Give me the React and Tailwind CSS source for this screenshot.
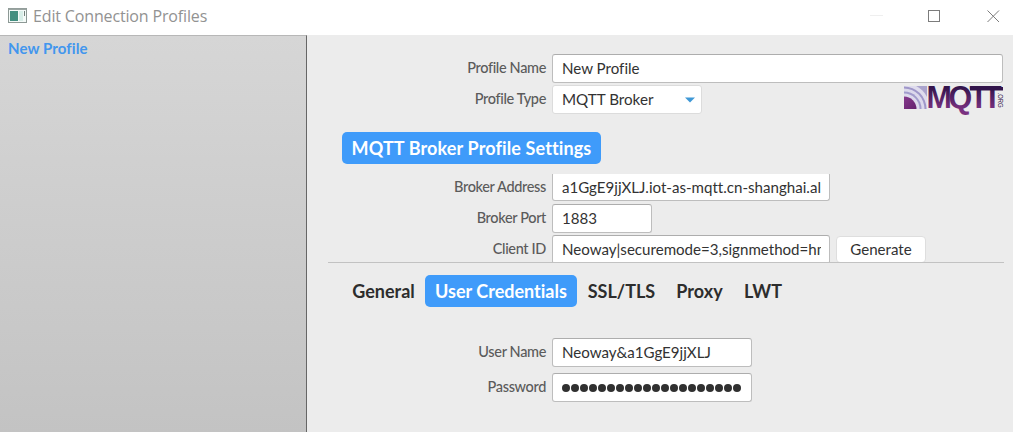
import { useState } from 'react';
import clsx from 'clsx';

const tabs = [
    { name: 'General', className: 'w-[83px]' },
    { name: 'User Credentials', className: 'w-[152px]' },
    { name: 'SSL/TLS', className: 'w-[89px]' },
    { name: 'Proxy', className: 'w-[67px]' },
    { name: 'LWT', className: 'w-[60px]' },
];

const MqttLogo = () => (
    <svg width="99" height="26" viewBox="0 0 99 26" className="overflow-visible">
        <defs>
            <linearGradient id="mqtt" gradientUnits="userSpaceOnUse" x1="0" y1="1" x2="0" y2="23">
                <stop offset="0" stopColor="#32144b" />
                <stop offset="1" stopColor="#793180" />
            </linearGradient>
            <linearGradient id="core" x1="0" y1="0" x2="1" y2="1">
                <stop offset="0" stopColor="#96469b" />
                <stop offset="1" stopColor="#55155f" />
            </linearGradient>
            <clipPath id="tile">
                <rect x="0" y="0" width="23" height="23" />
            </clipPath>
        </defs>
        <g clipPath="url(#tile)">
            <rect x="0" y="0" width="23" height="23" fill="#aaa3cd" />
            <circle cx="0" cy="23" r="26" fill="#dfdced" />
            <circle cx="0" cy="23" r="22.5" fill="#9f97c9" />
            <circle cx="0" cy="23" r="20.5" fill="#dcd9ec" />
            <circle cx="0" cy="23" r="17.5" fill="#a29ccc" />
            <circle cx="0" cy="23" r="15.5" fill="#dddaec" />
            <circle cx="0" cy="23" r="12.5" fill="url(#core)" />
        </g>
        <text x="22.5 44.5 65.5 79" y="22" fontFamily="Liberation Sans, sans-serif" fontWeight="700" fontSize="30.5" fill="url(#mqtt)">MQTT</text>
        <rect x="66" y="1" width="33" height="3.5" fill="#32144b" />
        <text transform="translate(93.5 6.5) rotate(90)" textLength="15" lengthAdjust="spacingAndGlyphs" fontFamily="Liberation Sans, sans-serif" fontSize="7" fill="#32144b">.ORG</text>
    </svg>
);

const Label = ({ children }) => (
    <label className="w-[219px] shrink-0 pr-[6px] text-right text-[14.5px] leading-[28px] font-medium tracking-[-0.35px] text-[#5b5b5b]">
        {children}
    </label>
);

const Field = ({ className, value, type = 'text' }) => (
    <input
        type={type}
        defaultValue={value}
        className={clsx(
            'h-[29px] rounded-[3px] border border-[#bdbdbd] border-t-[#adadad] bg-white pl-[9px] pr-[8px] text-[15.1px] text-[#323232] outline-none',
            className
        )}
    />
);

const App = () => {
    const [activeTab, setActiveTab] = useState('User Credentials');

    return (
        <div className="flex h-[432px] w-[1013px] flex-col overflow-hidden bg-[#ececec] font-['Lato',sans-serif] [font-variant-ligatures:none]">
            {/* Title bar */}
            <header className="flex h-[35px] shrink-0 items-center bg-white pl-[8px] pr-[13px]">
                <svg width="19" height="15" viewBox="0 0 19 15" className="mt-[-4px]">
                    <rect x="0.5" y="0.5" width="18" height="14" fill="#f4faf8" stroke="#8d9995" />
                    <rect x="0.5" y="0.5" width="18" height="1.5" fill="#9aa4a1" />
                    <rect x="2" y="3" width="8" height="10" fill="#438f80" />
                    <rect x="11" y="3" width="4" height="10" fill="#d8eee8" />
                    <path d="M16.5 3v5" stroke="#71817c" />
                </svg>
                <h1 className="ml-[6px] mt-[-3px] font-['Open_Sans',sans-serif] text-[16px] tracking-[-0.15px] text-[#929292]">Edit Connection Profiles</h1>
                <div className="ml-auto mt-[-3px] flex items-center">
                    <svg width="130" height="14" viewBox="0 0 130 14" fill="none">
                        <path d="M0 6.5h13" stroke="#efefef" />
                        <rect x="58.5" y="1.5" width="11" height="11" stroke="#7c7c7c" />
                        <path d="M117.5 1.5l11.5 11.5M129 1.5l-11.5 11.5" stroke="#7c7c7c" />
                    </svg>
                </div>
            </header>

            <div className="flex flex-1">
                {/* Profile list */}
                <aside className="w-[307px] shrink-0 border-t border-r border-t-[#b7b7b7] border-r-[#666] bg-linear-to-b from-[#d6d6d6] to-[#c3c3c3] pl-[8px] pt-px">
                    <span className="block text-[15px] leading-[22px] font-bold tracking-[0.1px] text-[#4296ee]">New Profile</span>
                </aside>

                <main className="w-[706px] pl-[26px] pt-[19px]">
                    <div className="flex">
                        <Label>Profile Name</Label>
                        <Field className="w-[451px] pb-[2px]" value="New Profile" />
                    </div>
                    <div className="mt-[2px] flex">
                        <Label>Profile Type</Label>
                        <button className="flex h-[29px] w-[150px] items-center justify-between rounded-[3px] border border-[#dcdcdc] bg-white pl-[9px] pr-[6px] text-[15.2px] text-[#323232]">
                            MQTT Broker
                            <svg width="10" height="6" viewBox="0 0 10 6">
                                <path d="M0 0.5h10l-5 5z" fill="#3f98d6" />
                            </svg>
                        </button>
                        <div className="ml-auto mr-[10px] mt-px">
                            <MqttLogo />
                        </div>
                    </div>

                    <h2 className="mt-[18px] ml-[9px] h-[32px] w-[259px] rounded-[5px] bg-[#3f9bfa] text-center text-[18px] leading-[32px] font-bold tracking-[0.12px] whitespace-nowrap text-white">
                        MQTT Broker Profile Settings
                    </h2>

                    {/* Connection settings, scrolled a little */}
                    <section className="mt-[10px] ml-[-5px] h-[89px] w-[676px] overflow-hidden border-b border-[#c2c2c2] pl-[5px]">
                        <div className="mt-[-2px] flex">
                            <Label><span className="relative top-px">Broker Address</span></Label>
                            <Field className="w-[278px]" value="a1GgE9jjXLJ.iot-as-mqtt.cn-shanghai.al" />
                        </div>
                        <div className="mt-[3px] flex">
                            <Label>Broker Port</Label>
                            <Field className="w-[100px] pb-[2px]" value="1883" />
                        </div>
                        <div className="mt-[2px] flex">
                            <Label>Client ID</Label>
                            <Field className="w-[278px] pb-[2px]" value="Neoway|securemode=3,signmethod=hmacsha1|" />
                            <button className="ml-[6px] mt-px h-[27px] w-[90px] rounded-[4px] border border-[#dedede] bg-white text-[15.1px] text-[#323232]">Generate</button>
                        </div>
                    </section>

                    <nav className="mt-[12px] ml-[9px] flex h-[32px]">
                        {tabs.map((tab) => (
                            <button
                                key={tab.name}
                                onClick={() => setActiveTab(tab.name)}
                                className={clsx(
                                    'rounded-[5px] text-center text-[18px] leading-[32px] font-bold whitespace-nowrap',
                                    activeTab === tab.name ? 'bg-[#3f9bfa] text-white' : 'text-[#2d2d2d]',
                                    tab.className
                                )}
                            >
                                {tab.name}
                            </button>
                        ))}
                    </nav>

                    <div className="mt-[31px] flex">
                        <Label>User Name</Label>
                        <Field className="w-[200px] pb-[2px]" value="Neoway&a1GgE9jjXLJ" />
                    </div>
                    <div className="mt-[6px] flex">
                        <Label>Password</Label>
                        <div className="flex h-[29px] w-[200px] items-center gap-[1px] rounded-[3px] border border-[#bdbdbd] border-t-[#adadad] bg-white pl-[9px]">
                            {[...Array(20)].map((_, i) => (
                                <span key={i} className="h-[8px] w-[8px] rounded-full bg-[#303030]" />
                            ))}
                        </div>
                    </div>
                </main>
            </div>
        </div>
    );
};

export default App;
